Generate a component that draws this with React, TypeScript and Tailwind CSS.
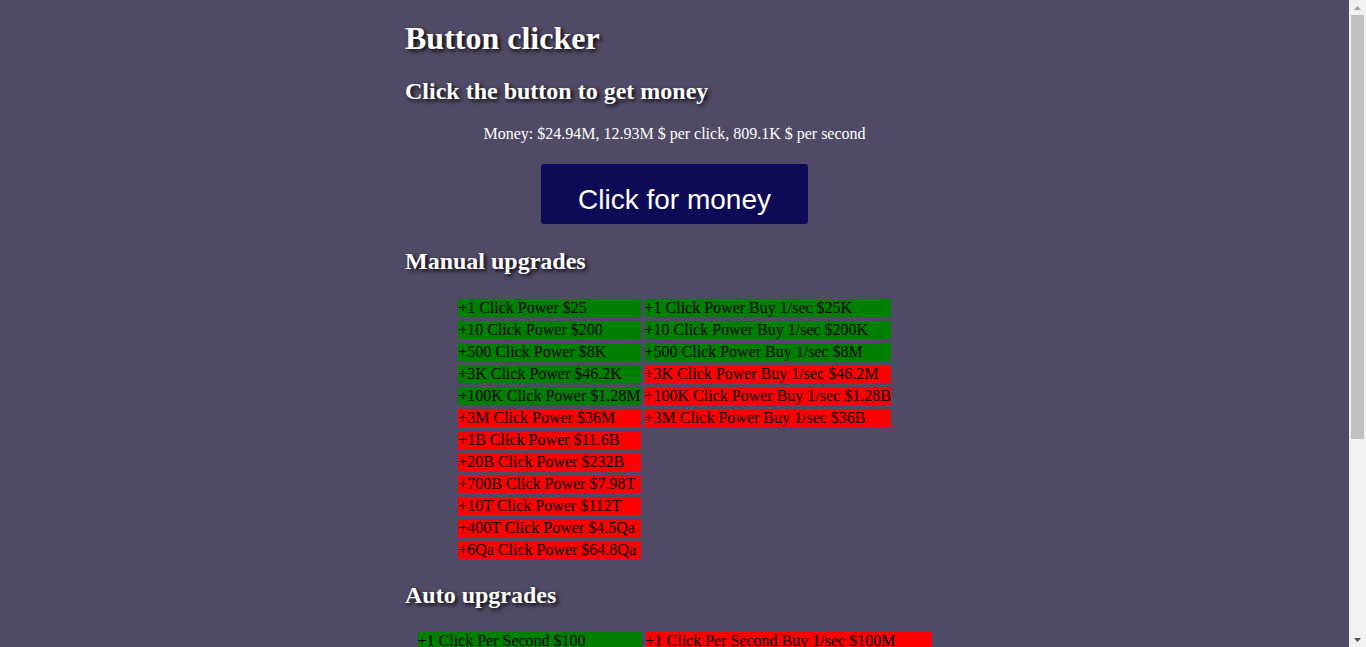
const manual = [
  { left: { label: '+1 Click Power $25', ok: true }, right: { label: '+1 Click Power Buy 1/sec $25K', ok: true } },
  { left: { label: '+10 Click Power $200', ok: true }, right: { label: '+10 Click Power Buy 1/sec $200K', ok: true } },
  { left: { label: '+500 Click Power $8K', ok: true }, right: { label: '+500 Click Power Buy 1/sec $8M', ok: true } },
  { left: { label: '+3K Click Power $46.2K', ok: true }, right: { label: '+3K Click Power Buy 1/sec $46.2M', ok: false } },
  { left: { label: '+100K Click Power $1.28M', ok: true }, right: { label: '+100K Click Power Buy 1/sec $1.28B', ok: false } },
  { left: { label: '+3M Click Power $36M', ok: false }, right: { label: '+3M Click Power Buy 1/sec $36B', ok: false } },
  { left: { label: '+1B Click Power $11.6B', ok: false } },
  { left: { label: '+20B Click Power $232B', ok: false } },
  { left: { label: '+700B Click Power $7.98T', ok: false } },
  { left: { label: '+10T Click Power $112T', ok: false } },
  { left: { label: '+400T Click Power $4.5Qa', ok: false } },
  { left: { label: '+6Qa Click Power $64.8Qa', ok: false } },
];

const auto = [
  { left: { label: '+1 Click Per Second $100', ok: true }, right: { label: '+1 Click Per Second Buy 1/sec $100M', ok: false } },
  { left: { label: '+10 Click Per Second $1.1K', ok: true }, right: { label: '+10 Click Per Second Buy 1/sec $1.1B', ok: false } },
  { left: { label: '+80 Click Per Second $9.6K', ok: true }, right: { label: '+80 Click Per Second Buy 1/sec $9.6B', ok: false } },
  { left: { label: '+500 Click Per Second $62K', ok: true }, right: { label: '+500 Click Per Second Buy 1/sec $62B', ok: false } },
  { left: { label: '+4K Click Per Second $520K', ok: true }, right: { label: '+4K Click Per Second Buy 1/sec $520B', ok: false } },
  { left: { label: '+30K Click Per Second $4.2M', ok: false }, right: { label: '+30K Click Per Second Buy 1/sec $4.2T', ok: false } },
  { left: { label: '+250K Click Per Second $36.4M', ok: false }, right: { label: '+250K Click Per Second Buy 1/sec $36.4T', ok: false } },
  { left: { label: '+2M Click Per Second $300M', ok: false } },
  { left: { label: '+15M Click Per Second $2.4B', ok: false } },
  { left: { label: '+120M Click Per Second $20B', ok: false } },
];

type Cell = { label: string; ok: boolean };

const UpgradeCell = ({ cell }: { cell?: Cell }) =>
  cell ? (
    <button
      className={`h-[18px] leading-[18px] text-left whitespace-nowrap overflow-hidden text-black text-[16px] ${
        cell.ok ? 'bg-[#008000]' : 'bg-[#ff0000]'
      }`}
    >
      {cell.label}
    </button>
  ) : (
    <div />
  );

const UpgradeGrid = ({ rows, className }: { rows: { left: Cell; right?: Cell }[]; className: string }) => (
  <div className={`${className} mx-auto grid gap-1`}>
    {rows.map((row) => (
      <div key={row.left.label} className="contents">
        <UpgradeCell cell={row.left} />
        <UpgradeCell cell={row.right} />
      </div>
    ))}
  </div>
);

// fake classic scrollbar, headless browser hides the real one
const Scrollbar = () => (
  <div className="w-[17px] shrink-0 bg-[#f1f1f1] flex flex-col">
    <div className="h-[15px] flex items-center justify-center">
      <svg width="7" height="4" viewBox="0 0 7 4">
        <polygon points="3.5,0 7,4 0,4" fill="#a3a3a3" />
      </svg>
    </div>
    <div className="flex-1 flex flex-col">
      <div className="h-[424px] mx-[2px] bg-[#c1c1c1]" />
    </div>
    <div className="h-[15px] flex items-center justify-center">
      <svg width="7" height="4" viewBox="0 0 7 4">
        <polygon points="0,0 7,0 3.5,4" fill="#505050" />
      </svg>
    </div>
  </div>
);

const heading = 'text-white font-bold [text-shadow:2px_2px_4px_#000]';

export default function App() {
  return (
    <div className="h-screen flex overflow-hidden">
      <main className="flex-1 min-w-0 overflow-hidden bg-[#514a66] font-['Liberation_Serif',serif]">
        <div className="w-[539px] mx-auto flex flex-col pb-[40px]">
          <h1 className={`${heading} text-[32px] leading-[37px] pt-[20px]`}>Button clicker</h1>
          <h2 className={`${heading} text-[24px] leading-[28px] mt-[20px]`}>
            Click the button to get money
          </h2>
          <p className="text-white text-[16px] leading-[18px] mt-[20px] text-center">
            Money: $24.94M, 12.93M $ per click, 809.1K $ per second
          </p>
          <button className="mt-[21px] mx-auto w-[267px] h-[60px] pt-[12px] rounded-[3px] bg-[#0e0b56] text-white text-[28px] font-['Liberation_Sans',Arial,sans-serif]">
            Click for money
          </button>
          <h2 className={`${heading} text-[24px] leading-[28px] mt-[23px]`}>Manual upgrades</h2>
          <UpgradeGrid rows={manual} className="mt-[24px] grid-cols-[auto_auto]" />
          <h2 className={`${heading} text-[24px] leading-[28px] mt-[22px]`}>Auto upgrades</h2>
          <UpgradeGrid rows={auto} className="mt-[23px] grid-cols-[224px_286px]" />
        </div>
      </main>
      <Scrollbar />
    </div>
  );
}
